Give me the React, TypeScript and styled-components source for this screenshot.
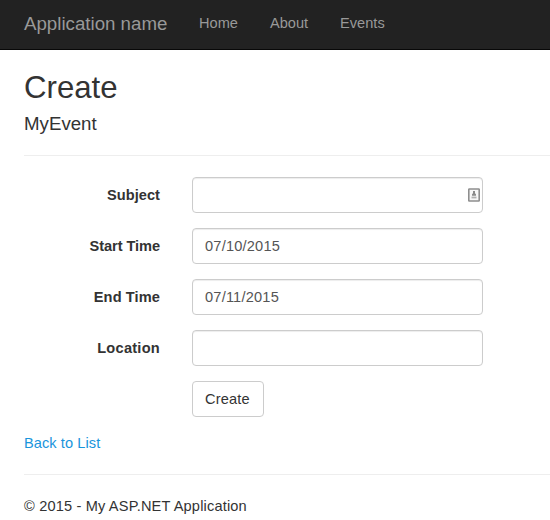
import React from "react";
import styled, { createGlobalStyle } from "styled-components";

const GlobalStyle = createGlobalStyle`
  * { box-sizing: border-box; }
  body {
    margin: 0;
    background: #fff;
    color: #333;
    font-family: "Liberation Sans", Arial, sans-serif;
    font-size: 14.6px;
    line-height: 21px;
    overflow: hidden;
  }
`;

const Navbar = styled.header`
  display: flex;
  align-items: center;
  height: 50px;
  padding: 0 24px 3px;
  background: #222;
  border-bottom: 1px solid #080808;
`;

const Brand = styled.a`
  width: 175px;
  color: #999;
  font-size: 18.7px;
`;

const NavLinks = styled.nav`
  display: flex;
  gap: 32px;
`;

const NavLink = styled.a`
  color: #999;
`;

const Body = styled.main`
  padding: 21px 0 0 24px;
`;

const Title = styled.h2`
  margin: 0;
  font-size: 31.2px;
  font-weight: 400;
  line-height: 34px;
`;

const Subtitle = styled.h4`
  margin: 9px 0 0;
  font-size: 18.7px;
  font-weight: 400;
  line-height: 20px;
`;

const Divider = styled.hr`
  height: 1px;
  margin: 21px 0 0;
  border: 0;
  background: #eee;
`;

const Form = styled.form`
  display: flex;
  flex-direction: column;
  gap: 15px;
  margin-top: 21px;
`;

const Row = styled.div`
  display: grid;
  grid-template-columns: 136px 291px;
  column-gap: 32px;
  height: 36px;
  align-items: center;
`;

const Label = styled.label<{ $tracking: number }>`
  text-align: right;
  font-weight: 700;
  letter-spacing: ${(p) => p.$tracking}px;
`;

const Field = styled.div`
  position: relative;
  grid-column: 2;
  height: 36px;
`;

const Input = styled.input`
  display: block;
  width: 100%;
  height: 36px;
  padding: 0 12px 0;
  border: 1px solid #ccc;
  border-radius: 4px;
  outline: 0;
  background: #fff;
  box-shadow: inset 0 1px 1px rgba(0, 0, 0, 0.075);
  color: #555;
  font: inherit;
  letter-spacing: 0.2px;
`;

const ContactIcon = styled.svg`
  position: absolute;
  top: 11px;
  right: 3px;
`;

const Button = styled.button`
  display: block;
  width: 72px;
  height: 36px;
  padding: 0 0 0 12px;
  text-align: left;
  border: 1px solid #ccc;
  border-radius: 4px;
  background: #fff;
  color: #333;
  font: inherit;
  letter-spacing: 0.15px;
`;

const BackLink = styled.a`
  display: block;
  margin-top: 16px;
  color: #1995dc;
  letter-spacing: 0.07px;

  & + ${Divider} {
    margin-top: 20px;
  }
`;

const Footer = styled.footer`
  margin-top: 21px;
  letter-spacing: 0.16px;
`;

const fields = [
  { id: "subject", label: "Subject", value: "", tracking: 0.05, contact: true },
  { id: "start", label: "Start Time", value: "07/10/2015", tracking: -0.07 },
  { id: "end", label: "End Time", value: "07/11/2015", tracking: 0.1 },
  { id: "location", label: "Location", value: "", tracking: 0.25 },
];

export default function App() {
  return (
    <>
      <GlobalStyle />
      <Navbar>
        <Brand>Application name</Brand>
        <NavLinks>
          <NavLink>Home</NavLink>
          <NavLink>About</NavLink>
          <NavLink>Events</NavLink>
        </NavLinks>
      </Navbar>
      <Body>
        <Title>Create</Title>
        <Subtitle>MyEvent</Subtitle>
        <Divider />
        <Form>
          {fields.map((f) => (
            <Row key={f.id}>
              <Label htmlFor={f.id} $tracking={f.tracking}>{f.label}</Label>
              <Field>
                <Input id={f.id} defaultValue={f.value} />
                {f.contact && (
                  <ContactIcon width="12" height="14" viewBox="0 0 12 14">
                    <rect x="0.8" y="1" width="10.4" height="12" rx="0.6" fill="#f7f7f7" stroke="#8e8e8e" strokeWidth="1.6" />
                    <path d="M5 3h2v2.2l1 1v1.5H4V6.2l1-1z" fill="#8a8a8a" />
                    <path d="M3.5 8.6h5v1.8h-5z" fill="#b0b0b0" />
                  </ContactIcon>
                )}
              </Field>
            </Row>
          ))}
          <Row>
            <Field>
              <Button type="button">Create</Button>
            </Field>
          </Row>
        </Form>
        <BackLink>Back to List</BackLink>
        <Divider />
        <Footer>© 2015 - My ASP.NET Application</Footer>
      </Body>
    </>
  );
}
